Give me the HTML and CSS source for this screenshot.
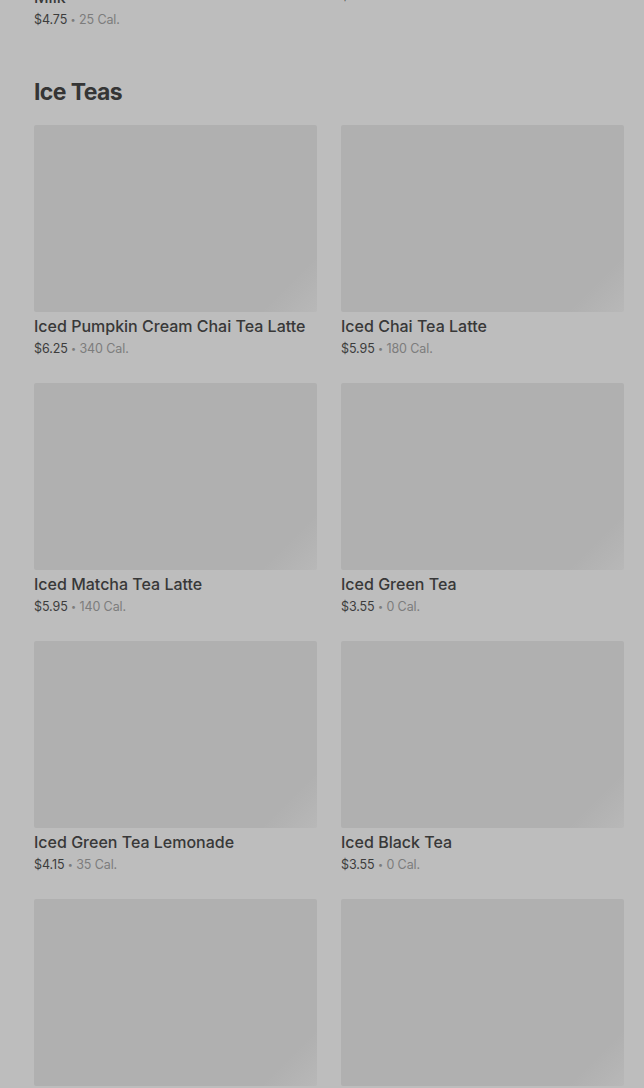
FILE: index.html
```html
<!DOCTYPE html>
<html lang="en">

<head>
    <meta charset="UTF-8">
    <meta name="viewport" content="width=device-width, initial-scale=1.0">
    <title>Menu</title>
    <link rel="stylesheet" href="styles.css">
</head>

<body>
    <div class="menu">

        <div class="menu-section prev-section">
            <div class="item-grid">
                <div class="item">
                    <div class="item-img"></div>
                    <div class="item-name">Cold Brew Coffee with Splash of<br>Milk</div>
                    <div class="item-meta"><span class="price">$4.75</span> <span class="dot">•</span> 25 Cal.</div>
                </div>
                <div class="item">
                    <div class="item-img"></div>
                    <div class="item-name">Vanilla Sweet Cream Cold Brew</div>
                    <div class="item-meta"><span class="price">$5.95</span> <span class="dot">•</span> 200 Cal.</div>
                </div>
            </div>
        </div>

        <div class="menu-section">
            <h2 class="section-title">Ice Teas</h2>
            <div class="item-grid">
                <div class="item">
                    <div class="item-img"></div>
                    <div class="item-name">Iced Pumpkin Cream Chai Tea Latte</div>
                    <div class="item-meta"><span class="price">$6.25</span> <span class="dot">•</span> 340 Cal.</div>
                </div>
                <div class="item">
                    <div class="item-img"></div>
                    <div class="item-name">Iced Chai Tea Latte</div>
                    <div class="item-meta"><span class="price">$5.95</span> <span class="dot">•</span> 180 Cal.</div>
                </div>
                <div class="item">
                    <div class="item-img"></div>
                    <div class="item-name">Iced Matcha Tea Latte</div>
                    <div class="item-meta"><span class="price">$5.95</span> <span class="dot">•</span> 140 Cal.</div>
                </div>
                <div class="item">
                    <div class="item-img"></div>
                    <div class="item-name">Iced Green Tea</div>
                    <div class="item-meta"><span class="price">$3.55</span> <span class="dot">•</span> 0 Cal.</div>
                </div>
                <div class="item">
                    <div class="item-img"></div>
                    <div class="item-name">Iced Green Tea Lemonade</div>
                    <div class="item-meta"><span class="price">$4.15</span> <span class="dot">•</span> 35 Cal.</div>
                </div>
                <div class="item">
                    <div class="item-img"></div>
                    <div class="item-name">Iced Black Tea</div>
                    <div class="item-meta"><span class="price">$3.55</span> <span class="dot">•</span> 0 Cal.</div>
                </div>
                <div class="item">
                    <div class="item-img"></div>
                    <div class="item-name">Iced Black Tea Lemonade</div>
                    <div class="item-meta"><span class="price">$4.15</span> <span class="dot">•</span> 35 Cal.</div>
                </div>
                <div class="item">
                    <div class="item-img"></div>
                    <div class="item-name">Iced Passion Tango Tea</div>
                    <div class="item-meta"><span class="price">$3.55</span> <span class="dot">•</span> 0 Cal.</div>
                </div>
            </div>
        </div>

    </div>
</body>

</html>
```

FILE: styles.css
```css
* {
    box-sizing: border-box;
}

html,
body {
    height: 100%;
    overflow: hidden;
}

body {
    margin: 0;
    background: #bdbdbd;
    font-family: Inter, "Liberation Sans", sans-serif;
    color: #363636;
}

/* list is scrolled: the previous section's last row sits above the fold */
.menu {
    padding: 0 20px 0 34px;
    margin-top: -228px;
}

.menu-section {
    margin-bottom: 46px;
}

.section-title {
    margin: 0 0 17px;
    font-size: 23px;
    line-height: 32px;
    font-weight: 700;
    letter-spacing: -0.6px;
    color: #353535;
}

.item-grid {
    display: grid;
    grid-template-columns: 1fr 1fr;
    column-gap: 24px;
    row-gap: 24px;
}

.item-img {
    height: 187px;
    background: linear-gradient(135deg, #b0b0b0 0%, #b0b0b0 88%, #b8b8b8 100%);
    border-radius: 2px;
}

.item-name {
    margin-top: 2px;
    font-size: 16px;
    line-height: 24px;
    font-weight: 500;
    color: #383838;
}

.item-meta {
    font-size: 12.5px;
    line-height: 21px;
    color: #7c7c7c;
    letter-spacing: -0.1px;
}

.price {
    color: #3c3c3c;
}

.dot {
    font-size: 9px;
    vertical-align: 1px;
}
```
